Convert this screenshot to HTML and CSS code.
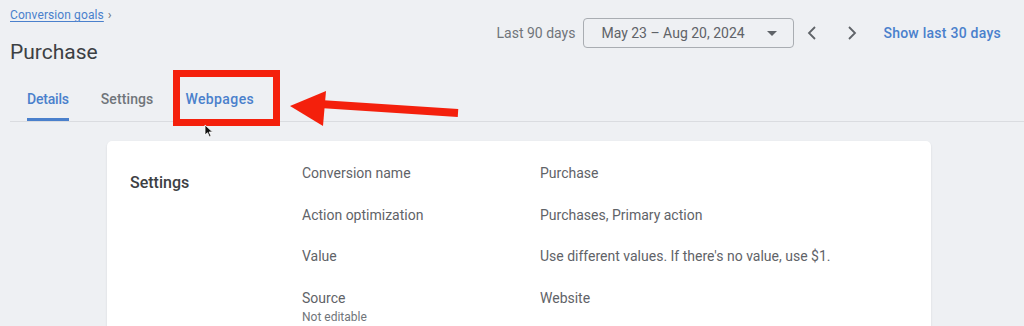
FILE: index.html
```html
<!doctype html>
<html lang="en">
<head>
	<meta charset="UTF-8">
	<title>Purchase - Conversion goals</title>
	<link rel="stylesheet" href="styles.css">
</head>
<body>
	<div class="page">
		<div class="top">
			<div class="title-block">
				<div class="crumbs"><a href="#">Conversion goals</a><span class="crumb-sep">&rsaquo;</span></div>
				<h1>Purchase</h1>
			</div>
			<div class="range">
				<span class="range-label">Last 90 days</span>
				<div class="date-select">
					<span>May 23 – Aug 20, 2024</span>
					<svg class="caret" width="10" height="5" viewBox="0 0 10 5"><path d="M0 0h10L5 5z" fill="#5f6368"/></svg>
				</div>
				<button class="nav-btn" aria-label="Previous"><svg width="12" height="16" viewBox="0 0 12 16"><path d="M9 2L3 8l6 6" fill="none" stroke="#5f6368" stroke-width="1.8"/></svg></button>
				<button class="nav-btn" aria-label="Next"><svg width="12" height="16" viewBox="0 0 12 16"><path d="M3 2l6 6-6 6" fill="none" stroke="#5f6368" stroke-width="1.8"/></svg></button>
				<a class="range-link" href="#">Show last 30 days</a>
			</div>
		</div>

		<div class="tabs">
			<a class="tab active" href="#">Details</a>
			<a class="tab" href="#">Settings</a>
			<a class="tab tab-blue" href="#">Webpages</a>
		</div>

		<div class="card">
			<h2 class="card-title">Settings</h2>
			<div class="rows">
				<div class="label">Conversion name</div>
				<div class="value">Purchase</div>
				<div class="label">Action optimization</div>
				<div class="value">Purchases, Primary action</div>
				<div class="label">Value</div>
				<div class="value">Use different values. If there's no value, use $1.</div>
				<div class="label">Source<small>Not editable</small></div>
				<div class="value">Website</div>
			</div>
		</div>
	</div>

	<!-- annotation drawn over the screenshot -->
	<div class="mark-box"></div>
	<svg class="mark-arrow" width="190" height="50" viewBox="0 0 190 50">
		<path d="M40 24L178 33" stroke="#f4200c" stroke-width="8" fill="none"/>
		<polygon points="10,26 46,11 43,46" fill="#f4200c"/>
	</svg>
	<svg class="cursor" width="10" height="14" viewBox="0 0 10 14">
		<path d="M1 1v10l2.5-2.3 2 4.3 1.6-.8-2-4.2H8.6z" fill="#111" stroke="#fff" stroke-width=".8"/>
	</svg>
</body>
</html>
```

FILE: styles.css
```css
*{
	margin:0;
	padding:0;
	box-sizing:border-box;
}
body{
	background:#eef0f3;
	font-family:Roboto, "Liberation Sans", Arial, sans-serif;
	color:#5f6368;
	width:1024px;
	height:326px;
	overflow:hidden;
	position:relative;
}
a{
	text-decoration:none;
}
.top{
	display:flex;
	justify-content:space-between;
	padding:0 23px 0 10px;
}
.crumbs{
	margin-top:7px;
	font-size:12px;
	line-height:16px;
	letter-spacing:.1px;
}
.crumbs a{
	color:#4a80cc;
	text-decoration:underline;
	text-underline-offset:2px;
}
.crumb-sep{
	margin-left:4px;
	color:#70757a;
	font-size:13px;
}
h1{
	margin-top:15px;
	font-size:21px;
	font-weight:400;
	line-height:28px;
	color:#3c4043;
}
.range{
	display:flex;
	align-items:center;
	margin-top:18px;
	height:30px;
	font-size:14px;
}
.range-label{
	margin-right:8px;
	color:#70757a;
}
.date-select{
	display:flex;
	align-items:center;
	justify-content:space-between;
	width:211px;
	height:30px;
	padding:0 16px 0 17px;
	border:1px solid #a9adb2;
	border-radius:4px;
	color:#5f6368;
}
.nav-btn{
	display:flex;
	align-items:center;
	justify-content:center;
	width:28px;
	height:30px;
	border:0;
	background:none;
	margin-left:4px;
}
.nav-btn + .nav-btn{
	margin-left:12px;
}
.range-link{
	margin-left:17px;
	color:#4a80cc;
	font-weight:500;
	letter-spacing:.25px;
}
.tabs{
	display:flex;
	gap:32px;
	margin:23px 0 0 10px;
	padding-left:17px;
	border-bottom:1px solid #dadce0;
}
.tab{
	font-size:14px;
	font-weight:500;
	line-height:20px;
	padding-bottom:9px;
	border-bottom:3px solid transparent;
	color:#70757a;
	letter-spacing:.1px;
}
.tab.active{
	color:#4a80cc;
	border-bottom-color:#4a80cc;
	letter-spacing:-.2px;
}
.tab-blue{
	color:#4a80cc;
	letter-spacing:.4px;
}
.card{
	display:flex;
	margin:19px 0 0 107px;
	width:824px;
	height:200px;
	padding:22px 0 0 23px;
	background:#fff;
	border-radius:5px 5px 0 0;
	box-shadow:0 1px 2px rgba(60,64,67,.15);
}
.card-title{
	width:172px;
	margin-top:10px;
	font-size:16px;
	font-weight:500;
	line-height:20px;
	color:#3c4043;
}
.rows{
	display:grid;
	grid-template-columns:238px 1fr;
	row-gap:21.5px;
	font-size:14px;
	line-height:20px;
	align-content:start;
}
.label{
	color:#5f6368;
}
.label small{
	display:block;
	margin-top:1px;
	font-size:12px;
	line-height:16px;
	color:#70757a;
}
.value{
	color:#5f6368;
}
.mark-box{
	position:absolute;
	left:173px;
	top:70px;
	width:107px;
	height:56px;
	border:7px solid #f4200c;
}
.mark-arrow{
	position:absolute;
	left:280px;
	top:80px;
}
.cursor{
	position:absolute;
	left:204px;
	top:124px;
}
```
